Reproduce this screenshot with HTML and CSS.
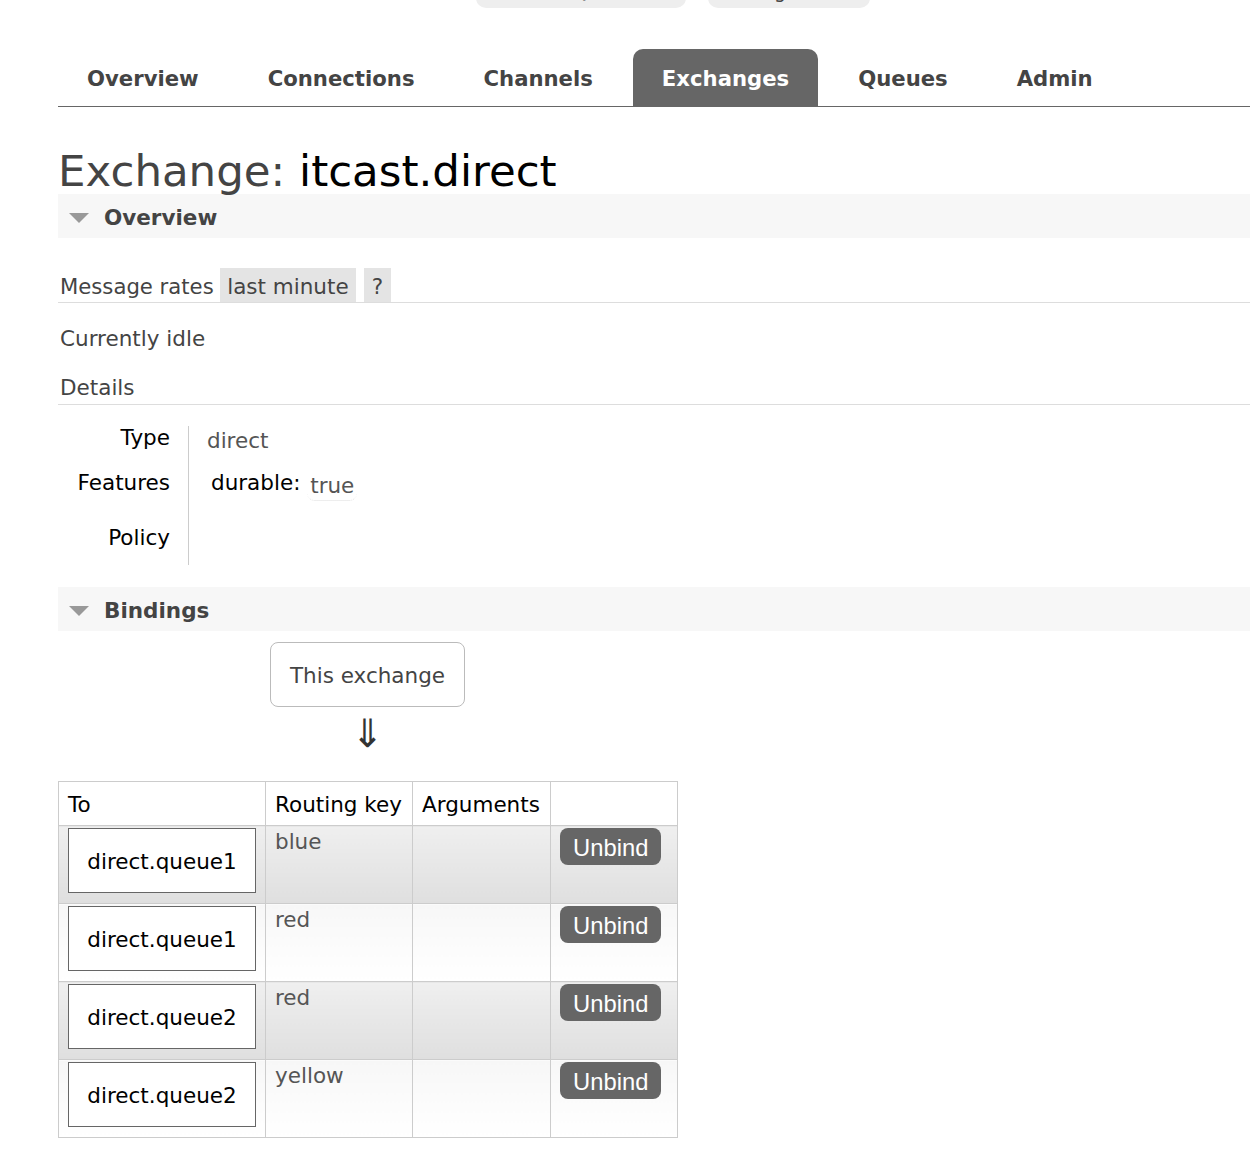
FILE: index.html
```html
<!DOCTYPE html>
<html lang="en">
<head>
<meta charset="utf-8">
<title>RabbitMQ Management - Exchange: itcast.direct</title>
<link rel="stylesheet" href="styles.css">
</head>
<body>
<div class="page">
  <div class="versions">
    <span class="badge badge-rmq">RabbitMQ 3.12.13</span>
    <span class="badge badge-erl">Erlang 25.3.2</span>
  </div>

  <nav class="tabs">
    <a class="tab">Overview</a>
    <a class="tab">Connections</a>
    <a class="tab">Channels</a>
    <a class="tab active">Exchanges</a>
    <a class="tab">Queues</a>
    <a class="tab">Admin</a>
  </nav>

  <h1 class="title"><span class="title-kind">Exchange: </span><b class="title-name">itcast.direct</b></h1>

  <div class="section-head"><span class="tri"></span>Overview</div>

  <div class="rates">
    <span class="rates-label">Message rates</span>
    <span class="pill pill-wide">last minute</span>
    <span class="pill">?</span>
  </div>

  <p class="idle">Currently idle</p>

  <div class="details-title">Details</div>

  <div class="facts">
    <div class="fk">Type</div>
    <div class="fv fv-type">direct</div>
    <div class="fk">Features</div>
    <div class="fv fv-feat">durable: <span class="flag">true</span></div>
    <div class="fk">Policy</div>
    <div class="fv"></div>
  </div>

  <div class="section-head section-bind"><span class="tri"></span>Bindings</div>

  <div class="bind-wrap">
    <div class="this-ex">This exchange</div>
    <div class="arrow">&#8659;</div>
    <table class="bindings">
      <colgroup>
        <col class="c-to"><col class="c-key"><col class="c-args"><col class="c-act">
      </colgroup>
      <thead>
        <tr><th>To</th><th>Routing key</th><th>Arguments</th><th></th></tr>
      </thead>
      <tbody>
        <tr class="alt1">
          <td class="to"><span class="queue">direct.queue1</span></td>
          <td class="key">blue</td>
          <td></td>
          <td class="act"><span class="btn">Unbind</span></td>
        </tr>
        <tr class="alt2">
          <td class="to"><span class="queue">direct.queue1</span></td>
          <td class="key">red</td>
          <td></td>
          <td class="act"><span class="btn">Unbind</span></td>
        </tr>
        <tr class="alt1">
          <td class="to"><span class="queue">direct.queue2</span></td>
          <td class="key">red</td>
          <td></td>
          <td class="act"><span class="btn">Unbind</span></td>
        </tr>
        <tr class="alt2">
          <td class="to"><span class="queue">direct.queue2</span></td>
          <td class="key">yellow</td>
          <td></td>
          <td class="act"><span class="btn">Unbind</span></td>
        </tr>
      </tbody>
    </table>
  </div>
</div>
</body>
</html>
```

FILE: styles.css
```css
* { box-sizing: border-box; }

html, body {
  margin: 0;
  background: #fff;
}

body {
  font-family: "DejaVu Sans", Verdana, sans-serif;
  font-size: 21.5px;
  line-height: 24px;
  color: #444;
  overflow: hidden;
}

.page {
  padding-left: 58px;
}

/* version badges, cut off at the top of the window */
.versions {
  display: flex;
  gap: 22px;
  margin-top: -26px;
  padding-left: 418px;
}

.badge {
  display: block;
  height: 34px;
  background: #eee;
  border-radius: 10px;
  padding-top: 5px;
  font-size: 19px;
  line-height: 24px;
  text-align: center;
  color: #444;
  white-space: nowrap;
  overflow: hidden;
}
.badge-rmq { width: 210px; }
.badge-erl { width: 162px; }

/* main tabs */
.tabs {
  display: flex;
  margin-top: 41px;
  border-bottom: 1px solid #666;
}

.tab {
  display: block;
  height: 57px;
  padding: 3px 29px 0;
  line-height: 54px;
  margin-right: 11px;
  font-size: 21.2px;
  font-weight: bold;
  color: #444;
  text-decoration: none;
}

.tab.active {
  background: #666;
  color: #fff;
  border-radius: 10px 10px 0 0;
}

/* heading */
.title {
  margin: 41px 0 0;
  font-size: 43.5px;
  line-height: 46px;
  font-weight: normal;
  color: #444;
  white-space: nowrap;
}
.title-name {
  font-weight: normal;
  color: #000;
}

/* collapsible section headers */
.section-head {
  display: flex;
  align-items: center;
  height: 44px;
  padding-top: 3px;
  background: #f7f7f7;
  font-weight: bold;
  color: #444;
}
.tri {
  width: 0;
  height: 0;
  border-left: 10px solid transparent;
  border-right: 10px solid transparent;
  border-top: 10px solid #999;
  margin: 0 15px 0 11px;
}

/* message rates */
.rates {
  display: flex;
  align-items: flex-end;
  margin-top: 30px;
  padding-left: 2px;
  border-bottom: 1px solid #ddd;
}
.rates-label {
  font-size: 21.2px;
  margin-right: 6px;
  padding-bottom: 3px;
}
.pill {
  display: block;
  height: 34px;
  padding: 4px 7.5px 0;
  line-height: 30px;
  background: #e4e4e4;
  color: #444;
  margin-right: 8px;
}
.pill-wide { padding: 4px 7.5px 0; }

.idle {
  margin: 24px 0 0;
  padding-left: 2px;
}

.details-title {
  margin-top: 25px;
  padding: 0 0 4px 2px;
  border-bottom: 1px solid #ddd;
}

/* details key/value grid */
.facts {
  display: grid;
  grid-template-columns: 130px 1fr;
  grid-template-rows: 45px 55px 39px;
  margin-top: 21px;
}
.fk {
  text-align: right;
  padding-right: 18px;
  color: #000;
}
.fv {
  border-left: 1px solid #ccc;
  padding-left: 18px;
  color: #555;
}
.fv-type { padding-top: 3px; }
.fv-feat {
  padding-left: 22px;
  color: #000;
}
.flag {
  display: inline-block;
  color: #555;
  padding: 0 3px 2px;
  border-bottom: 1px dotted #ddd;
  border-radius: 0 0 8px 8px;
  vertical-align: -3px;
}

.section-bind {
  margin-top: 22px;
}

/* bindings diagram + table */
.bind-wrap {
  width: 619px;
  display: flex;
  flex-direction: column;
  align-items: center;
}

.this-ex {
  margin-top: 11px;
  height: 65px;
  padding: 3px 19px 0;
  line-height: 59px;
  border: 1px solid #bbb;
  border-radius: 8px;
  color: #444;
}

.arrow {
  margin-top: 9px;
  font-size: 39px;
  line-height: 36px;
  color: #333;
}

.bindings {
  align-self: stretch;
  margin-top: 29px;
  border-collapse: collapse;
  table-layout: fixed;
  width: 619px;
}
.c-to { width: 207px; }
.c-key { width: 147px; }
.c-args { width: 138px; }
.c-act { width: 127px; }

.bindings th,
.bindings td {
  border: 1px solid #ccc;
  text-align: left;
  vertical-align: top;
}

.bindings th {
  height: 44px;
  padding: 11px 9px 0;
  font-weight: normal;
  color: #000;
  background: #fff;
  white-space: nowrap;
}

.bindings td {
  height: 78px;
  padding: 4px 9px 0;
}

.alt1 td { background: linear-gradient(#efefef, #dfdfdf); }
.alt2 td { background: linear-gradient(#f7f7f7, #fff); }

.bindings td.to {
  padding: 2px 9px 0;
}
.queue {
  display: block;
  width: 188px;
  height: 65px;
  padding-top: 3px;
  line-height: 59px;
  border: 1px solid #666;
  background: #fff;
  color: #000;
  text-align: center;
}

.key {
  color: #555;
}

.bindings td.act {
  padding: 2px 9px 0;
}
.btn {
  display: inline-block;
  height: 37px;
  padding: 3px 13px 0;
  line-height: 34px;
  background: #666;
  color: #fff;
  border-radius: 8px;
  font-family: "Liberation Sans", Arial, sans-serif;
  font-size: 23.8px;
}
```
